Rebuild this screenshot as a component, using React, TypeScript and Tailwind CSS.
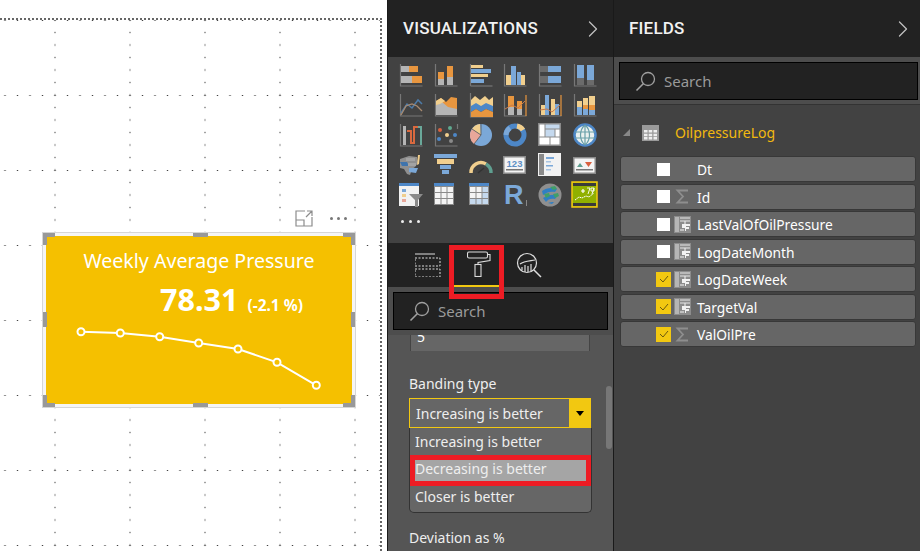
import type { ReactNode } from "react";
import { ChevronRight } from "lucide-react";

const O = "#e8963f";
const G = "#b5b5b5";
const B = "#7ba8d8";
const T = "#f1cf8e";
const A = "#777777";
const D = "#6b6b6b";

const Axis = () => <path d="M1.5 1v22h22" fill="none" stroke={A} strokeWidth="1.2" />;
const R = ({ x, y, w, h, c }: { x: number; y: number; w: number; h: number; c: string }) => (
  <rect x={x} y={y} width={w} height={h} fill={c} />
);

const vizIcons: ReactNode[] = [
  <><Axis /><R x={2} y={3} w={8} h={6} c={G} /><R x={10} y={3} w={9} h={6} c={O} /><R x={2} y={13} w={11} h={7} c={G} /><R x={13} y={13} w={10} h={7} c={O} /></>,
  <><Axis /><R x={4} y={9} w={6} h={7} c={O} /><R x={4} y={16} w={6} h={6} c={G} /><R x={13} y={3} w={6} h={11} c={O} /><R x={13} y={14} w={6} h={8} c={G} /></>,
  <><path d="M1.5 1v22" stroke={A} strokeWidth="1.2" /><R x={2} y={2} w={12} h={3} c={T} /><R x={2} y={6} w={20} h={4} c={B} /><R x={2} y={11} w={17} h={3} c={T} /><R x={2} y={16} w={13} h={4} c={B} /><path d="M1.5 23h22" stroke={A} strokeWidth="1.2" /></>,
  <><Axis /><R x={3} y={12} w={5} h={10} c={T} /><R x={8} y={3} w={5} h={19} c={B} /><R x={14} y={9} w={4} h={13} c={B} /><R x={18} y={12} w={4} h={10} c={T} /></>,
  <><Axis /><R x={2} y={3} w={8} h={6} c={D} /><R x={10} y={3} w={13} h={6} c={B} /><R x={2} y={13} w={8} h={7} c={D} /><R x={10} y={13} w={13} h={7} c={B} /></>,
  <><Axis /><R x={4} y={2} w={7} h={13} c={B} /><R x={4} y={15} w={7} h={7} c={D} /><R x={14} y={2} w={7} h={15} c={B} /><R x={14} y={17} w={7} h={5} c={D} /></>,

  <><Axis /><path d="M2 20l6-9 5 4 6-8 4 4" fill="none" stroke="#4d7ba8" strokeWidth="1.5" /><path d="M2 22l5-9 6-2 5 2 5 5" fill="none" stroke="#a88a70" strokeWidth="1.3" /></>,
  <><Axis /><path d="M2 8l5-3 5 4 5-5 6 1v17H2z" fill={O} /><path d="M2 12l6-3 6 5 9 2v6H2z" fill={G} /><path d="M2 8l5-3 4 3-5 3-4 1z" fill={T} /></>,
  <><path d="M1.5 0v24h22.5" fill="none" stroke={A} strokeWidth="1.2" /><path d="M2 7l4-4 5 4 5-4 4 4 4-3v11H2z" fill={T} /><path d="M2 13l5-3 5 3 5-3 7 3v6l-7-3-5 3-5-3-5 3z" fill="#4d87c7" /><path d="M2 19l5-3 5 3 5-3 7 3v5H2z" fill={O} /></>,
  <><Axis /><path d="M23 2v21" stroke={O} strokeWidth="1.2" /><R x={5} y={3} w={6} h={11} c={O} /><R x={5} y={14} w={6} h={8} c={G} /><R x={14} y={8} w={5} h={8} c={O} /><R x={14} y={16} w={5} h={6} c={G} /><path d="M2 16l7-4 6 3 7-7" fill="none" stroke="#c87b4a" strokeWidth="1" /></>,
  <><Axis /><path d="M23 2v21" stroke={O} strokeWidth="1.2" /><R x={3} y={12} w={4} h={10} c={T} /><R x={7} y={2} w={4} h={20} c={B} /><R x={13} y={6} w={4} h={16} c={T} /><R x={17} y={11} w={4} h={11} c={B} /><path d="M2 17l7-1 5 3 8-7" fill="none" stroke="#c87b4a" strokeWidth="1" /></>,
  <><Axis /><R x={4} y={8} w={5} h={6} c={T} /><R x={4} y={14} w={5} h={8} c={B} /><R x={10} y={5} w={5} h={7} c={T} /><R x={10} y={12} w={5} h={4} c={O} /><R x={10} y={16} w={5} h={6} c={B} /><R x={16} y={3} w={6} h={9} c={T} /><R x={16} y={12} w={6} h={5} c={O} /><R x={16} y={17} w={6} h={5} c={B} /></>,

  <><Axis /><R x={4} y={3} w={3} h={19} c={G} /><path d="M8 8h4v12h3V4h4" fill="none" stroke="#d9693f" strokeWidth="2" /><path d="M19 4h3v18" fill="none" stroke="#6aa89a" strokeWidth="2" /></>,
  <><path d="M1.5 1v22h22M23.5 1v5" fill="none" stroke={A} strokeWidth="1.2" /><circle cx="6" cy="7" r="2" fill="#d9603f" /><circle cx="16" cy="5" r="2" fill="#5fa88f" /><circle cx="13" cy="12" r="2" fill={T} /><circle cx="21" cy="12" r="2" fill="#4d87c7" /><circle cx="5" cy="16" r="2" fill="#4d87c7" /><circle cx="17" cy="18" r="2" fill="#8a8a8a" /></>,
  <><circle cx="12" cy="12" r="11" fill={B} /><path d="M12 12L11 1A11 11 0 0 0 3 6z" fill={T} /><path d="M12 12L3 6A11 11 0 0 0 5 21z" fill="#e8a79a" /><path d="M12 12V1M12 12L3 6M12 12l-7 9" stroke="#555" strokeWidth="0.8" /></>,
  <><circle cx="12" cy="12" r="9" fill="none" stroke="#4d87c7" strokeWidth="5" /><path d="M14 3a9 9 0 0 1 6 4" fill="none" stroke={T} strokeWidth="5" /><path d="M3 12a9 9 0 0 1 4-7" fill="none" stroke={B} strokeWidth="5" /></>,
  <><R x={0} y={0} w={23} h={23} c="#8a8a8a" /><R x={1.5} y={1.5} w={5} h={12} c="#ffffff" /><R x={7.5} y={1.5} w={14} h={4} c="#c5d9ee" /><R x={7.5} y={6.5} w={9} h={7} c="#c5d9ee" /><R x={17.5} y={6.5} w={4} h={7} c="#ffffff" /><R x={1.5} y={14.5} w={10} h={7} c="#ffffff" /><R x={12.5} y={14.5} w={9} h={7} c="#ffffff" /></>,
  <><circle cx="12" cy="12" r="10.5" fill="#e9f0ee" stroke="#4d87c7" strokeWidth="2.5" /><path d="M2 9h20M2 15h20M12 2v20M12 2c-6 5-6 15 0 20M12 2c6 5 6 15 0 20" fill="none" stroke="#6aa0a8" strokeWidth="1.2" /></>,

  <><path d="M1 6l9-3 8 1 1 6-3 4-3 2-2 6-3-1-3-5-4-1z" fill="#8f8f8f" /><path d="M1 9h7l2 4H3z" fill="#3f74ad" /><path d="M10 15h9l-2 5-7-1z" fill={B} /><path d="M19 2h2l-1 9-2 1z" fill={T} /><path d="M7 5h9v3H7zM9 10h8v3H9z" fill="#a3a3a3" /></>,
  <><R x={0} y={1} w={23} h={4} c={B} /><R x={3} y={6} w={17} h={5} c={T} /><R x={6} y={12} w={11} h={4} c={B} /><R x={8} y={17} w={7} h={4} c={B} /></>,
  <><path d="M2 20a10 10 0 0 1 15-9" fill="none" stroke={T} strokeWidth="3.5" /><path d="M17 11a10 10 0 0 1 5 9" fill="none" stroke="#5f9f90" strokeWidth="3.5" /><path d="M9 20l6-5" stroke="#333" strokeWidth="1.5" /></>,
  <><R x={0} y={3} w={23} h={18} c="#8a8a8a" /><R x={1.5} y={4.5} w={20} h={15} c="#f4f4f4" /><text x="11.5" y="14" textAnchor="middle" fontSize="9.5" fontWeight="700" fontFamily="'Liberation Sans',sans-serif" fill="#5d8fc4">123</text><R x={3} y={16} w={17} h={1.5} c="#777777" /></>,
  <><R x={0} y={0} w={23} h={23} c="#f2f2f2" /><R x={1} y={1} w={5} h={21} c="#8a8a8a" /><R x={8} y={4} w={8} h={2} c={B} /><R x={8} y={8} w={5} h={1.5} c="#a8c4e2" /><R x={8} y={12} w={7} h={1.5} c={B} /><R x={8} y={16} w={5} h={1.5} c="#a8c4e2" /></>,
  <><R x={0} y={4} w={23} h={17} c="#8a8a8a" /><R x={1.5} y={5.5} w={20} h={14} c="#f4f4f4" /><path d="M4 14l3-4 3 4z" fill="#5f9f90" /><path d="M12 9h7l-3.500 5z" fill="#d9603f" /><R x={3} y={16} w={17} h={1.5} c="#777777" /></>,

  <><R x={0} y={0} w={20} h={23} c="#f2f2f2" /><R x={0} y={0} w={20} h={3} c="#4d87c7" /><R x={3} y={6} w={4} h={3} c={B} /><R x={3} y={11} w={4} h={3} c={T} /><R x={3} y={16} w={4} h={3} c="#e8a79a" /><path d="M10 11h14l-5 6v7h-3v-7z" fill="#8a8a8a" /></>,
  <><R x={0} y={0} w={20} h={22} c="#8a8a8a" /><R x={0} y={0} w={20} h={3} c="#4d87c7" /><path d="M1 4h5.500v5H1zM7.500 4H12.500v5H7.500zM13.500 4H19v5h-5.500zM1 10h5.500v5H1zM7.500 10H12.500v5H7.500zM13.500 10H19v5h-5.500zM1 16h5.500v5H1zM7.500 16H12.500v5H7.500zM13.500 16H19v5h-5.500z" fill="#f4f4f4" /></>,
  <><R x={0} y={0} w={20} h={22} c="#8a8a8a" /><R x={0} y={0} w={20} h={3} c="#4d87c7" /><path d="M1 4h5.500v5H1zM7.500 4H12.500v5H7.500zM1 10h5.500v5H1zM7.500 10H12.500v5H7.500z" fill="#f4f4f4" /><path d="M13.500 4H19v5h-5.500zM13.500 10H19v5h-5.500zM1 16h5.500v5H1zM7.500 16H12.500v5H7.500zM13.500 16H19v5h-5.500z" fill="#c5d9ee" /></>,
  <><text x="1" y="21" fontSize="27" fontWeight="700" fontFamily="'Liberation Sans',sans-serif" fill={B} textLength="19">R</text><path d="M23.500 17v6" stroke="#9a9a9a" strokeWidth="0.8" /></>,
  <><circle cx="12" cy="12" r="11.500" fill="#8f8f8f" /><path d="M4 8c4-3 10-4 15-2l-2 3c-4-1-8 0-12 3zM5 15c4-3 9-4 15-3l-3 4c-4-1-7 0-9 3zM10 20c2-1 4-1 6-1l-2 2z" fill="#2f7fc4" /><path d="M12 4l5-1 2 3-4 1zM6 11l5-1 1 3-4 2zM15 11l5-1 1 3-4 2z" fill="#3f9f6a" /></>,
];

const Panel = ({ title, className, chevron, children }: { title: string; className: string; chevron: string; children: ReactNode }) => (
  <div className={`flex h-full flex-col ${className}`}>
    <div className={`flex h-[57px] shrink-0 items-center justify-between bg-[#222222] pl-[15px] ${chevron}`}>
      <span className="font-['Roboto',sans-serif] text-[17px] font-medium tracking-[0.2px] text-[#f2f2f2]">{title}</span>
      <ChevronRight className="h-[28px] w-[28px] text-[#c0c0c0]" strokeWidth={1.1} />
    </div>
    {children}
  </div>
);

const SearchBox = ({ className }: { className: string }) => (
  <div className={`flex h-[38px] items-center border border-black bg-[#222222] pl-[15px] ${className}`}>
    <svg width="21" height="21" viewBox="0 0 21 21" fill="none" stroke="#a0a0a0" strokeWidth="1.300">
      <circle cx="13" cy="8" r="6.500" />
      <path d="M8.500 12.500L1.500 19.500" strokeWidth="1.600" />
    </svg>
    <span className="ml-[8px] text-[15px] text-[#9a9a9a]">Search</span>
  </div>
);

const MeasureIcon = () => (
  <svg width="17" height="17" viewBox="0 0 17 17">
    <rect width="17" height="17" fill="#8c8c8c" />
    <rect x="1" y="1" width="4" height="15" fill="#b5b5b5" />
    <path d="M6 2h10M6 5h10M11 5v3" stroke="#e6e6e6" strokeWidth="1.2" />
    <path d="M8 8h8v2h-4v1h3v2h-3v2h-1v-3H8z" fill="#f2f2f2" />
    <path d="M6 14h4" stroke="#e6e6e6" strokeWidth="1.2" />
  </svg>
);

const SigmaIcon = () => (
  <svg width="17" height="17" viewBox="0 0 17 17">
    <path d="M14 2.500H3.500L9 8.500l-5.500 6H14" fill="none" stroke="#8e8e8e" strokeWidth="1.800" />
  </svg>
);

const fields: { name: string; icon?: "sum" | "calc"; checked?: boolean }[] = [
  { name: "Dt" },
  { name: "Id", icon: "sum" },
  { name: "LastValOfOilPressure", icon: "calc" },
  { name: "LogDateMonth", icon: "calc" },
  { name: "LogDateWeek", icon: "calc", checked: true },
  { name: "TargetVal", icon: "calc", checked: true },
  { name: "ValOilPre", icon: "sum", checked: true },
];

const points: [number, number][] = [
  [35, 95.7],
  [74.3, 97],
  [113.7, 100.7],
  [152.7, 107],
  [192, 113],
  [231, 126.3],
  [270.3, 149.3],
];

const handles = [
  "left-0 top-0 h-[4px] w-[12px]",
  "left-0 top-0 h-[12px] w-[4px]",
  "right-0 top-0 h-[4px] w-[12px]",
  "right-0 top-0 h-[12px] w-[4px]",
  "left-0 bottom-0 h-[4px] w-[12px]",
  "left-0 bottom-0 h-[12px] w-[4px]",
  "right-0 bottom-0 h-[4px] w-[12px]",
  "right-0 bottom-0 h-[12px] w-[4px]",
  "left-[150px] top-0 h-[4px] w-[15px]",
  "left-[150px] bottom-0 h-[4px] w-[15px]",
  "left-0 top-[79px] h-[15px] w-[4px]",
  "right-0 top-[79px] h-[15px] w-[4px]",
];

export default function App() {
  return (
    <div className="flex h-[551px] w-[920px] overflow-hidden bg-white font-['Noto_Sans',sans-serif]">
      <div className="w-[387px] shrink-0 pt-[18px]">
        <div className="h-[2px] w-[382px] [background-image:repeating-linear-gradient(90deg,#666_0_2px,transparent_2px_4px)]" />
        <div className="flex h-[531px] w-[382px]">
          <div className="relative w-[380px] [background-image:radial-gradient(circle,#444_0.8px,transparent_1px),radial-gradient(circle,#444_0.8px,transparent_1px)] [background-position:17.5px_-6.25px,-1.25px_-37px] [background-size:75px_12.5px,12.5px_75px]">
            <div className="absolute left-[295px] top-[190px]">
              <svg width="18" height="17" viewBox="0 0 18 17" fill="none" stroke="#8c8c8c" strokeWidth="1.200">
                <path d="M10 1H1v15h16V7M1 10h8v6M12 1h5v5M17 1l-6 6" />
              </svg>
            </div>
            <div className="absolute left-[330px] top-[197px] flex gap-[4px]">
              <span className="h-[3px] w-[3px] rounded-full bg-[#777777]" />
              <span className="h-[3px] w-[3px] rounded-full bg-[#777777]" />
              <span className="h-[3px] w-[3px] rounded-full bg-[#777777]" />
            </div>

            <div className="absolute left-[42px] top-[212px] h-[176px] w-[314px] border border-[#d6d6d6] bg-[#f5f5f5] p-[3px]">
              <div className="h-full w-full bg-[#f5c000] text-white">
                <div className="pt-[10px] text-center text-[19.600px] leading-[30px]">Weekly Average Pressure</div>
                <div className="mt-[6px] flex items-baseline justify-end gap-[9px] pr-[49px] leading-[34px]">
                  <span className="text-[30.500px] font-bold">78.31</span>
                  <span className="text-[15.500px] font-bold">(-2.1 %)</span>
                </div>
              </div>
              {handles.map((h) => (
                <span key={h} className={`absolute bg-[#999999] ${h}`} />
              ))}
              <svg className="absolute left-[3px] top-[3px]" width="306" height="167" viewBox="0 0 306 167">
                <polyline points={points.map((p) => p.join(",")).join(" ")} fill="none" stroke="#ffffff" strokeWidth="2" />
                {points.map(([x, y]) => (
                  <circle key={x} cx={x} cy={y} r="3.500" fill="#f5c000" stroke="#ffffff" strokeWidth="2" />
                ))}
              </svg>
            </div>
          </div>
          <div className="w-[2px] [background-image:repeating-linear-gradient(0deg,#666_0_2px,transparent_2px_4px)]" />
        </div>
      </div>

      <Panel title="VISUALIZATIONS" chevron="pr-[6px]" className="w-[227px] shrink-0 border-x border-x-[#1a1a1a]">
        <div className="h-[186px] shrink-0 bg-[#424242] pl-[11px] pt-[6px]">
          <div className="grid w-[209px] grid-cols-6">
            {vizIcons.map((icon, i) => (
              <div key={i} className="h-[30px]">
                <svg className="overflow-visible" width="24" height="24" viewBox="0 0 24 24">{icon}</svg>
              </div>
            ))}
            <div className="h-[30px]">
              <svg width="27" height="27" viewBox="0 0 27 27" className="-translate-x-[2px] -translate-y-[2px]">
                <rect x="1" y="1" width="25" height="25" fill="#90b000" stroke="#f2c811" strokeWidth="1.500" />
                <rect x="2" y="2" width="23" height="3" fill="#3a3a3a" />
                <rect x="2" y="22" width="23" height="3" fill="#3a3a3a" />
                <path d="M4 19l4-3 3 1 4-2 3 1 5-4" fill="none" stroke="#ffffff" strokeWidth="1" strokeDasharray="1.500 .5" />
                <path d="M10 10h4M12 8v4" stroke="#ffffff" strokeWidth="1.200" />
                <path d="M16 7h3l-2 6M20 7h3v3h-3zM21 13l2-6" fill="none" stroke="#ffffff" strokeWidth="0.900" />
              </svg>
            </div>
          </div>
          <div className="flex gap-[5px] pl-[2px] pt-[7px]">
            <span className="h-[3px] w-[3px] rounded-full bg-[#eeeeee]" />
            <span className="h-[3px] w-[3px] rounded-full bg-[#eeeeee]" />
            <span className="h-[3px] w-[3px] rounded-full bg-[#eeeeee]" />
          </div>
        </div>

        <div className="relative flex h-[44px] shrink-0 bg-[#222222] pl-[27px]">
          <div className="flex w-[39px] items-center">
            <svg width="26" height="24" viewBox="0 0 26 24" fill="none" stroke="#dddddd" strokeWidth="1">
              <path d="M0 1h20" />
              <path d="M0 5h25v8H0zM0 16h25v8H0z" strokeDasharray="2 1.500" />
            </svg>
          </div>
          <div className="flex w-[45px] items-center border-b-2 border-[#f2c811] pl-[13px]">
            <svg width="24" height="26" viewBox="0 0 24 26" fill="none" stroke="#dddddd" strokeWidth="1.100">
              <rect x="0.500" y="1" width="20" height="6" rx="1.500" />
              <path d="M21 3.500h2v6l-12 2v2" />
              <rect x="8" y="13.500" width="6" height="12" />
            </svg>
          </div>
          <div className="flex w-[45px] items-center pl-[17px]">
            <svg width="27" height="27" viewBox="0 0 27 27" fill="none" stroke="#dddddd" strokeWidth="1.200">
              <circle cx="11" cy="11" r="9.500" />
              <path d="M18 18l7 7" strokeWidth="1.500" />
              <path d="M4 12c4-3 10-3 15-4M6 15v3M9 13v7M12 14v6M15 12v7" />
            </svg>
          </div>
          <span className="absolute bottom-[-12px] left-[61px] h-[54px] w-[55px] border-[5px] border-[#ed1c24]" />
        </div>

        <div className="shrink-0 bg-[#4d4d4d] px-[5px] py-[5px]">
          <SearchBox className="" />
        </div>

        <div className="relative flex-1 overflow-hidden bg-[#555555]">
          <div className="ml-[22px] mt-[-5px] h-[21px] w-[180px] border-x border-[#444444] bg-[#666666] pl-[6px] text-[14px] leading-[13px] text-white">5</div>
          <div className="ml-[21px] mt-[23px] text-[14px] leading-[20px] text-[#eeeeee]">Banding type</div>
          <div className="ml-[21px] mt-[4px] flex h-[30px] w-[182px] items-center justify-between border border-[#f2c811] bg-[#666666] pl-[6px] text-[14px] text-[#eeeeee]">
            <span>Increasing is better</span>
            <span className="flex h-full w-[21px] items-center justify-center bg-[#f2c811]">
              <span className="h-0 w-0 border-x-[4px] border-t-[5px] border-x-transparent border-t-black" />
            </span>
          </div>
          <div className="ml-[21px] flex h-[85px] w-[183px] flex-col rounded-b-[5px] border border-t-0 border-[#333333] bg-[#666666] text-[14px] text-[#eeeeee]">
            <div className="h-[27px] pl-[5px] leading-[27px]">Increasing is better</div>
            <div className="h-[31px] border-[5px] border-[#ed1c24] bg-[#a5a5a5] pl-[0px] leading-[18px]">Decreasing is better</div>
            <div className="h-[26px] pl-[5px] leading-[22px]">Closer is better</div>
          </div>
          <div className="ml-[21px] mt-[15px] text-[14px] leading-[20px] text-[#eeeeee]">Deviation as %</div>
          <span className="absolute right-[1px] top-[51px] h-[63px] w-[6px] rounded-[3px] bg-[#777777]" />
        </div>
      </Panel>

      <Panel title="FIELDS" chevron="pr-[6px]" className="flex-1">
        <div className="h-[48px] shrink-0 border-b border-[#333333] bg-[#4d4d4d] px-[5px] pt-[5px]">
          <SearchBox className="w-[299px]" />
        </div>
        <div className="flex-1 bg-[#424242] pl-[6px]">
          <div className="flex h-[51px] items-center pt-[4px]">
            <span className="ml-[3px] h-0 w-0 border-b-[7px] border-l-[7px] border-b-[#888888] border-l-transparent" />
            <svg className="ml-[12px]" width="17" height="16" viewBox="0 0 17 16">
              <rect width="17" height="16" fill="#9a9a9a" />
              <path d="M2 5h3.500v2.500H2zM6.700 5h3.500v2.500H6.700zM11.500 5H15v2.500h-3.500zM2 8.700h3.500v2.500H2zM6.700 8.700h3.500v2.500H6.700zM11.500 8.700H15v2.500h-3.500zM2 12h3.500v2.500H2zM6.700 12h3.500v2.500H6.700zM11.500 12H15v2.500h-3.500z" fill="#eeeeee" />
            </svg>
            <span className="ml-[16px] text-[14px] text-[#f2b90f]">OilpressureLog</span>
          </div>
          <div className="flex w-[296px] flex-col gap-[1.500px]">
            {fields.map((f) => (
              <div key={f.name} className="flex h-[26px] items-center rounded-[3px] border border-[#383838] bg-[#666666] text-[13.800px] text-white">
                <div className="flex w-[50px] justify-end">
                  {f.checked ? (
                    <span className="flex h-[15px] w-[15px] items-center justify-center bg-[#f2c811]">
                      <svg width="10" height="8" viewBox="0 0 10 8" fill="none" stroke="#6b5a10" strokeWidth="1">
                        <path d="M1 4l3 3 5-6" />
                      </svg>
                    </span>
                  ) : (
                    <span className="mr-[1px] h-[13px] w-[13px] bg-white" />
                  )}
                </div>
                <div className="ml-[3px] flex h-[17px] w-[17px] items-center justify-center">
                  {f.icon === "sum" && <SigmaIcon />}
                  {f.icon === "calc" && <MeasureIcon />}
                </div>
                <span className="ml-[6px] pt-[3px]">{f.name}</span>
              </div>
            ))}
          </div>
        </div>
      </Panel>
    </div>
  );
}
